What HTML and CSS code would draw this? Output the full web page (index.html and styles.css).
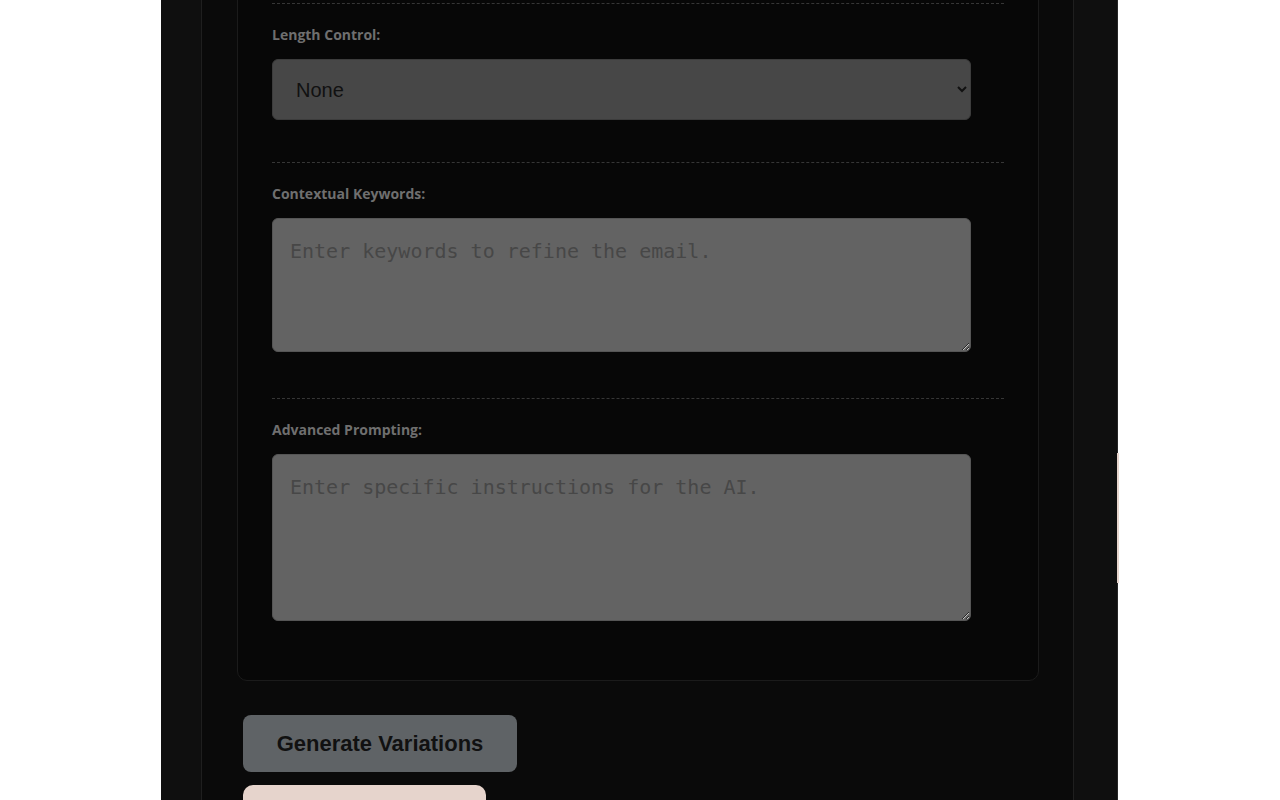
FILE: index.html
```html
<!DOCTYPE html>
<html lang="en">
<head>
<meta charset="utf-8">
<title>Email Variations</title>
<link rel="stylesheet" href="styles.css">
</head>
<body>
<div class="page">
  <div class="inner">
    <div class="card">
      <div class="section">
        <label class="label" for="length">Length Control:</label>
        <select id="length" class="field select">
          <option>None</option>
          <option>Short</option>
          <option>Medium</option>
          <option>Long</option>
        </select>
      </div>
      <div class="section">
        <label class="label" for="keywords">Contextual Keywords:</label>
        <textarea id="keywords" class="field area area-sm" placeholder="Enter keywords to refine the email."></textarea>
      </div>
      <div class="section">
        <label class="label" for="advanced">Advanced Prompting:</label>
        <textarea id="advanced" class="field area area-lg" placeholder="Enter specific instructions for the AI."></textarea>
      </div>
    </div>
    <div class="actions">
      <button class="btn btn-primary" type="button">Generate Variations</button>
      <button class="btn btn-secondary" type="button">Copy All</button>
    </div>
  </div>
  <div class="edge-tab"></div>
</div>
</body>
</html>
```

FILE: styles.css
```css
html, body {
  margin: 0;
  padding: 0;
  background: #ffffff;
  height: 100%;
  overflow: hidden;
}

body {
  padding-right: 1px;
  box-sizing: border-box;
}

.page {
  position: relative;
  width: 957px;
  height: 800px;
  margin: 0 auto;
  background: #0f0f0f;
  border-right: 1px solid #262626;
  box-sizing: border-box;
  padding-left: 40px;
  padding-right: 43px;
  font-family: "Open Sans", "Noto Sans", sans-serif;
}

.inner {
  height: 100%;
  background: #0a0a0a;
  border-left: 1px solid #1f1f1f;
  border-right: 1px solid #1f1f1f;
  overflow: hidden;
}

.card {
  margin: -30px 34px 0 35px;
  padding: 32px 34px 55px 34px;
  background: #070707;
  border: 1px solid #1b1b1b;
  border-radius: 10px;
}

.section {
  border-top: 1px dashed #363636;
  padding: 21px 0 42px 0;
}

.section:last-child {
  padding-bottom: 0;
}

.label {
  display: block;
  font-size: 14px;
  font-weight: 700;
  line-height: 20px;
  color: #6f6f6f;
  margin-bottom: 14px;
  padding-top: 1px;
  margin-top: -1px;
}

.field {
  display: block;
  box-sizing: border-box;
  width: calc(100% - 33px);
  border: 1px solid #3c3c3c;
  border-radius: 6px;
  margin: 0;
}

.select {
  height: 61px;
  background: #474747;
  color: #111111;
  font-family: "Liberation Sans", Arial, sans-serif;
  font-size: 20px;
  padding: 0 6px 0 19px;
}

.area {
  background: #636363;
  color: #2a2a2a;
  font-family: "DejaVu Sans Mono", "Liberation Mono", monospace;
  font-size: 20px;
  line-height: 23px;
  padding: 21px 17px;
  margin-bottom: 4px;
  border-color: #555555;
}

.area::placeholder {
  color: #474747;
}

.area-sm { height: 134px; }
.area-lg { height: 167px; }

.actions {
  margin: 34px 0 0 41px;
  display: flex;
  flex-direction: column;
  align-items: flex-start;
  gap: 13px;
}

.btn {
  border: none;
  font-family: "Liberation Sans", Arial, sans-serif;
  font-weight: 700;
  font-size: 22px;
  line-height: 23px;
  color: #111111;
  border-radius: 8px;
  cursor: pointer;
}

.btn-primary {
  background: #5f6366;
  padding: 17px 0;
  width: 274px;
}

.btn-secondary {
  background: #e6d4cc;
  padding: 17px 0;
  width: 243px;
  border-radius: 10px;
}

.edge-tab {
  position: absolute;
  right: -2px;
  top: 453px;
  width: 2px;
  height: 130px;
  background: #e6d4cc;
}
```
